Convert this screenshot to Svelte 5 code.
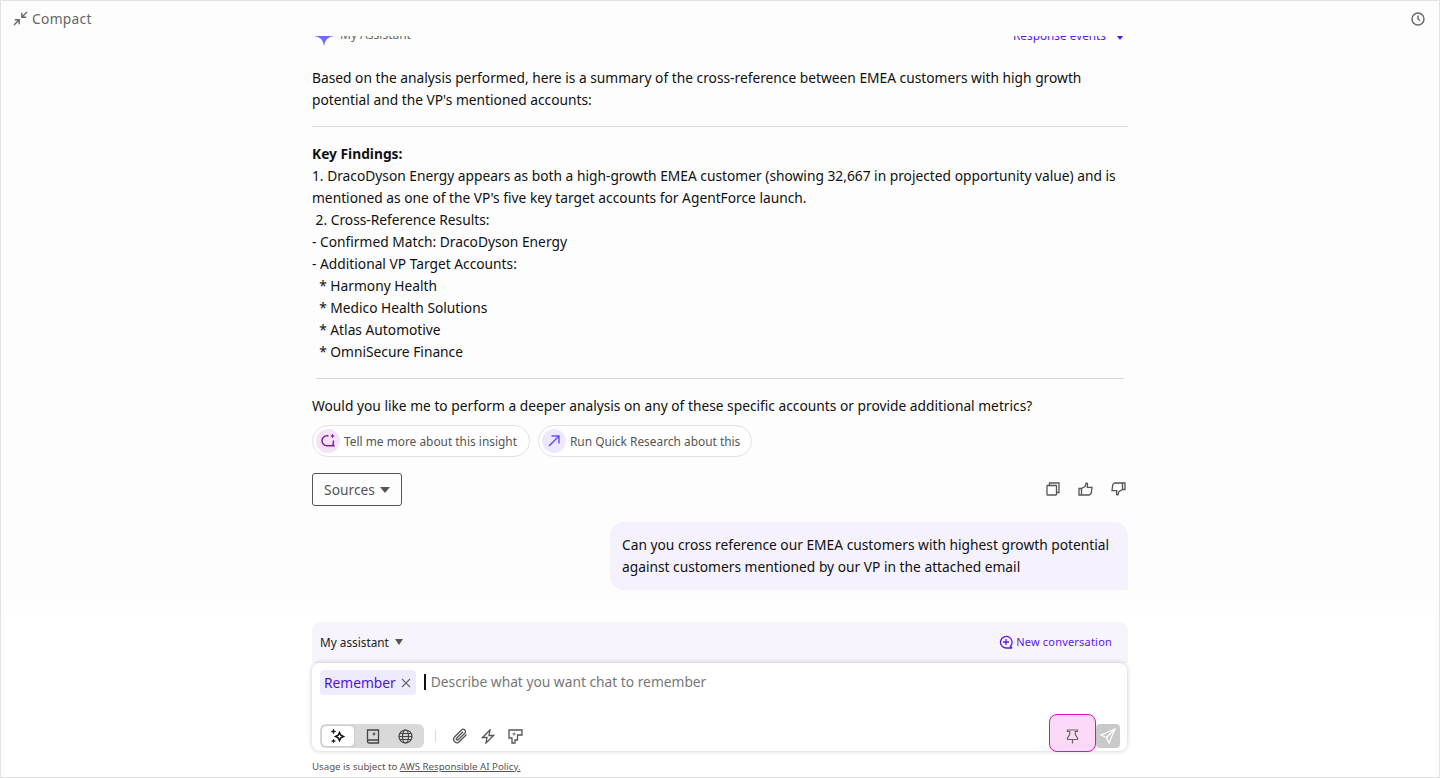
<script lang="ts">
  const findings = [
    "1. DracoDyson Energy appears as both a high-growth EMEA customer (showing 32,667 in projected opportunity value) and is mentioned as one of the VP's five key target accounts for AgentForce launch.",
    "\u00a02. Cross-Reference Results:",
    "- Confirmed Match: DracoDyson Energy",
    "- Additional VP Target Accounts:",
    "\u00a0\u00a0* Harmony Health",
    "\u00a0\u00a0* Medico Health Solutions",
    "\u00a0\u00a0* Atlas Automotive",
    "\u00a0\u00a0* OmniSecure Finance"
  ];
</script>

<div class="page">
  <header class="topbar">
    <button class="compact" type="button">
      <svg width="15" height="15" viewBox="0 0 15 15" fill="none" stroke="currentColor" stroke-width="1.4">
        <path d="M1 14 6 9M1.800 8.800h4.400v4.400M14 1 9 6M13.200 6.200H8.800V1.800" />
      </svg>
      Compact
    </button>
    <svg class="clock" width="14" height="14" viewBox="0 0 14 14" fill="none" stroke="currentColor" stroke-width="1.4">
      <circle cx="7" cy="7" r="6" />
      <path d="M7 3.500V7l2.200 1.500" />
    </svg>
  </header>

  <main class="scroller">
    <div class="thread">
      <div class="msg-head">
        <div class="who">
          <svg width="20" height="20" viewBox="0 0 20 20"><path d="M10 0Q11 9 20 10Q11 11 10 20Q9 11 0 10Q9 9 10 0Z" fill="#6b6cff" /></svg>
          <span>My Assistant</span>
        </div>
        <div class="events">Response events <span class="caret-sm"></span></div>
      </div>

      <p class="lead">Based on the analysis performed, here is a summary of the cross-reference between EMEA customers with high growth potential and the VP's mentioned accounts:</p>
      <hr class="rule" />
      <div class="findings">
        <strong>Key Findings:</strong>
        {#each findings as line}
          <div>{line}</div>
        {/each}
      </div>
      <hr class="rule short" />
      <p class="follow">Would you like me to perform a deeper analysis on any of these specific accounts or provide additional metrics?</p>

      <div class="chips">
        <button class="chip" type="button">
          <span class="chip-icon pink">
            <svg width="16" height="16" viewBox="0 0 16 16" fill="none" stroke="#8a1a9c" stroke-width="1.500">
              <path d="M8.500 2.800H7a5 5 0 0 0 0 10H13.800L13 11.200A5.500 5.500 0 0 0 13.300 7.500" />
              <path d="M12.500 0.500 13.200 2.300 15 3 13.200 3.700 12.500 5.500 11.800 3.700 10 3 11.800 2.300Z" fill="#8a1a9c" stroke="none" />
            </svg>
          </span>
          Tell me more about this insight
        </button>
        <button class="chip" type="button">
          <span class="chip-icon violet">
            <svg width="14" height="14" viewBox="0 0 14 14" fill="none" stroke="#6f4cff" stroke-width="1.500">
              <path d="M2 12 12 2M4.500 2H12v7.500" />
            </svg>
          </span>
          Run Quick Research about this
        </button>
      </div>

      <div class="actions">
        <button class="sources" type="button">Sources <span class="caret"></span></button>
        <div class="feedback">
          <svg width="14" height="14" viewBox="0 0 14 14" fill="none" stroke="currentColor" stroke-width="1.300">
            <rect x="1" y="3.500" width="9.500" height="9.500" rx="0.500" />
            <path d="M3.500 3.500V1H13V10.500H10.500" />
          </svg>
          <svg width="15" height="14" viewBox="0 0 15 14" fill="none" stroke="currentColor" stroke-width="1.300">
            <path d="M1 6.500h2.500V13H1zM3.500 6.500 7 4.500 8.200 1 9.500 1.500 9.300 5.300H14L13.200 11.500 11.300 13H3.500" />
          </svg>
          <svg width="15" height="14" viewBox="0 0 15 14" fill="none" stroke="currentColor" stroke-width="1.300">
            <path d="M14 7.500h-2.500V1H14zM11.500 7.500 8 9.500 6.800 13 5.500 12.500 5.700 8.700H1L1.800 2.500 3.700 1H11.500" />
          </svg>
        </div>
      </div>

      <div class="user-row">
        <div class="bubble">Can you cross reference our EMEA customers with highest growth potential against customers mentioned by our VP in the attached email</div>
      </div>
    </div>
    <div class="fade"></div>
  </main>

  <footer class="composer">
    <div class="composer-head">
      <div class="picker">My assistant <span class="caret-xs"></span></div>
      <div class="new-conv">
        <svg width="14" height="14" viewBox="0 0 14 14" fill="none" stroke="currentColor" stroke-width="1.300">
          <path d="M13 13 11.400 11.300A5.800 5.800 0 1 0 7 13H13M7 4v6M4 7h6" />
        </svg>
        New conversation
      </div>
    </div>
    <div class="box">
      <div class="input-row">
        <span class="tag">
          Remember
          <svg width="10" height="10" viewBox="0 0 10 10" fill="none" stroke="#666" stroke-width="1.100"><path d="M1 1l8 8M9 1 1 9" /></svg>
        </span>
        <span class="cursor"></span>
        <span class="placeholder">Describe what you want chat to remember</span>
      </div>
      <div class="tools">
        <div class="segment">
          <span class="seg active">
            <svg width="16" height="16" viewBox="0 0 16 16" fill="none" stroke="#111" stroke-width="1.500">
              <path d="M9.500 4.500 10.800 7.200 13.500 8.500 10.800 9.800 9.500 12.500 8.200 9.800 5.500 8.500 8.200 7.200Z" />
              <path d="M3.500 1 4.100 2.900 6 3.500 4.100 4.100 3.500 6 2.900 4.100 1 3.500 2.900 2.900ZM3.500 11 4 12.500 5.500 13 4 13.500 3.500 15 3 13.500 1.500 13 3 12.500Z" fill="#111" stroke-width="0.500" />
            </svg>
          </span>
          <span class="seg">
            <svg width="14" height="15" viewBox="0 0 14 15" fill="none" stroke="#444" stroke-width="1.300">
              <path d="M1.500 12.500V1H12.500V14H3A1.500 1.500 0 0 1 3 11H12.500" />
              <path d="M8 2.500 8.600 4.400 10.500 5 8.600 5.600 8 7.500 7.400 5.600 5.500 5 7.400 4.400Z" fill="#444" stroke="none" />
            </svg>
          </span>
          <span class="seg">
            <svg width="15" height="15" viewBox="0 0 15 15" fill="none" stroke="#444" stroke-width="1.200">
              <circle cx="7.500" cy="7.500" r="6.500" />
              <ellipse cx="7.500" cy="7.500" rx="3" ry="6.500" />
              <path d="M1 7.500h13M2 4.500h11M2 10.500h11" />
            </svg>
          </span>
        </div>
        <span class="sep"></span>
        <svg width="16" height="16" viewBox="0 0 16 16" fill="none" stroke="#555" stroke-width="1.300">
          <path d="M14.500 6.500 7.500 13.500a3.300 3.300 0 0 1-5-4.500L9.500 2a2.300 2.300 0 0 1 3.300 3.300L6.200 11.800a1.100 1.100 0 0 1-1.600-1.600L11 3.800" />
        </svg>
        <svg width="14" height="15" viewBox="0 0 14 15" fill="none" stroke="#555" stroke-width="1.300">
          <path d="M9 1 1.500 8.500H6L5 14 12.500 6.500H8Z" />
        </svg>
        <svg width="15" height="15" viewBox="0 0 15 15" fill="none" stroke="#555" stroke-width="1.300">
          <path d="M4 14V9H1V1H14V6H9.500V11H7V14Z" />
          <path d="M6 2.800 6.500 4.500 8.200 5 6.500 5.500 6 7.200 5.500 5.500 3.800 5 5.500 4.500Z" fill="#555" stroke="none" />
        </svg>
        <span class="grow"></span>
        <span class="pin">
          <svg width="13" height="15" viewBox="0 0 13 15" fill="none" stroke="#666" stroke-width="1.200">
            <path d="M1.500 1H11.500V2.500H9.300V5.500L11.500 9V10.500H1.500V9L3.700 5.500V2.500H1.500ZM6.500 10.500V14.500" />
          </svg>
        </span>
        <span class="send">
          <svg width="16" height="16" viewBox="0 0 16 16" fill="none" stroke="#fff" stroke-width="1.200">
            <path d="M15 1 1 7 6.500 9.500 9 15ZM15 1 6.500 9.500" />
          </svg>
        </span>
      </div>
    </div>
    <p class="legal">Usage is subject to <u>AWS Responsible AI Policy.</u></p>
  </footer>
</div>

<style>
  :global(body) {
    margin: 0;
    background: #fff;
  }

  .page {
    height: 778px;
    box-sizing: border-box;
    border: 1px solid #e2e2e2;
    display: flex;
    flex-direction: column;
    overflow: hidden;
    background: #fff;
    color: #111;
    font-family: "Noto Sans", sans-serif;
    font-size: 13.77px;
    line-height: 22px;
  }

  .topbar {
    flex: 0 0 35px;
    display: flex;
    align-items: center;
    justify-content: space-between;
    padding: 0 14px 0 12px;
    color: #666;
    background: #fdfdfd;
  }

  .compact {
    display: flex;
    align-items: center;
    gap: 4px;
    padding: 0;
    border: 0;
    background: none;
    color: #666;
    font: inherit;
    letter-spacing: 0.3px;
  }

  .scroller {
    flex: 1;
    min-height: 0;
    overflow: hidden;
    position: relative;
    background: #fdfdfd;
  }

  .thread {
    width: 816px;
    margin: 0 auto;
  }

  .msg-head {
    height: 30px;
    margin-top: -16px;
    display: flex;
    justify-content: space-between;
    align-items: center;
    font-size: 12px;
    color: #666;
  }

  .who {
    display: flex;
    align-items: center;
    gap: 6px;
    margin-left: 2px;
  }

  .who svg {
    margin-top: 2px;
  }

  .events {
    display: flex;
    align-items: center;
    gap: 11px;
    color: #5a17ee;
    font-size: 11.800px;
    padding-right: 5px;
  }

  .caret-sm {
    margin: 3px 0 -3px;
    border: 3px solid transparent;
    border-top: 4px solid #5a17ee;
    border-bottom: 0;
  }

  p {
    margin: 0;
  }

  .lead {
    margin-top: 17px;
  }

  .rule {
    margin: 15px 0 16px;
    border: 0;
    border-top: 1px solid #d8d8d8;
  }

  .rule.short {
    margin: 15px 4px 16px;
  }

  .findings strong {
    font-weight: 700;
    display: block;
  }

  .chips {
    display: flex;
    gap: 8px;
    margin-top: 8px;
  }

  .chip {
    height: 32px;
    box-sizing: border-box;
    display: flex;
    align-items: center;
    gap: 4px;
    padding: 0 11px 0 3px;
    border: 1px solid #e2e2e2;
    border-radius: 16px;
    background: #fff;
    color: #555;
    font: inherit;
    font-size: 11.900px;
  }

  .chip:first-child {
    padding-right: 12px;
  }

  .chip-icon {
    width: 24px;
    height: 24px;
    border-radius: 50%;
    display: grid;
    place-items: center;
  }

  .pink {
    background: #f3e3f5;
  }

  .violet {
    background: #ece8ff;
  }

  .actions {
    display: flex;
    justify-content: space-between;
    align-items: center;
    margin-top: 16px;
  }

  .sources {
    height: 33px;
    width: 90px;
    box-sizing: border-box;
    display: flex;
    align-items: center;
    justify-content: center;
    gap: 5px;
    border: 1px solid #555;
    border-radius: 3px;
    background: none;
    color: #555;
    font: inherit;
  }

  .caret {
    border: 5px solid transparent;
    border-top: 6px solid #555;
    border-bottom: 0;
  }

  .feedback {
    display: flex;
    gap: 18px;
    color: #555;
    padding-right: 2px;
    margin-top: -2px;
  }

  .user-row {
    display: flex;
    justify-content: flex-end;
    margin-top: 16px;
  }

  .bubble {
    width: 518px;
    box-sizing: border-box;
    padding: 12px;
    background: #f5f2fd;
    border-radius: 14px 14px 0 14px;
  }

  .fade {
    position: absolute;
    left: 0;
    right: 0;
    bottom: 0;
    height: 32px;
    background: linear-gradient(to bottom, rgba(255, 255, 255, 0), #fff);
  }

  .composer {
    flex: 0 0 155px;
    width: 816px;
    margin: 0 auto;
  }

  .composer-head {
    height: 41px;
    box-sizing: border-box;
    padding: 0 16px 2px 8px;
    display: flex;
    justify-content: space-between;
    align-items: center;
    background: #f7f4fe;
    border-radius: 8px 8px 0 0;
    font-size: 11.800px;
  }

  .picker {
    display: flex;
    align-items: center;
    gap: 6px;
    color: #222;
  }

  .caret-xs {
    border: 4.500px solid transparent;
    border-top: 6px solid #555;
    border-bottom: 0;
  }

  .new-conv {
    display: flex;
    align-items: center;
    gap: 3px;
    color: #5a17ee;
    font-size: 11px;
    letter-spacing: 0.2px;
  }

  .box {
    height: 88px;
    box-sizing: border-box;
    margin-right: 1px;
    background: #fff;
    border-radius: 8px;
    box-shadow: 0 0 5px rgba(0, 0, 0, 0.22);
    padding: 7px 7px 3px 8px;
    display: flex;
    flex-direction: column;
    justify-content: space-between;
  }

  .input-row {
    display: flex;
    align-items: center;
    height: 25px;
  }

  .tag {
    background: #eeeaff;
    color: #4d12e0;
    border-radius: 4px;
    padding: 0 5px 0 4px;
    height: 25px;
    display: flex;
    align-items: center;
    gap: 5px;
  }

  .cursor {
    width: 2px;
    height: 16px;
    background: #111;
    margin-left: 8px;
    margin-right: 5px;
    margin-bottom: 2px;
  }

  .placeholder {
    color: #777;
    padding-bottom: 2px;
  }

  .tools {
    display: flex;
    align-items: center;
    gap: 13px;
    height: 24px;
  }

  .segment {
    display: flex;
    background: #d9d9d9;
    border-radius: 6px;
    padding: 2px;
    height: 24px;
    box-sizing: border-box;
    align-items: center;
    margin-right: -2px;
  }

  .seg {
    width: 33px;
    height: 20px;
    display: grid;
    place-items: center;
  }

  .seg.active {
    width: 32px;
    margin-right: 2px;
    background: #fff;
    border-radius: 4px;
    box-shadow: 0 0 1px rgba(0, 0, 0, 0.4);
  }

  .sep {
    width: 1px;
    height: 12px;
    background: #ddd;
    margin-right: 3px;
  }

  .grow {
    flex: 1;
  }

  .pin {
    width: 47px;
    height: 38px;
    margin: -10px -13px -4px 0;
    box-sizing: border-box;
    border: 1px solid #e010b0;
    border-radius: 8px;
    background: #fcd9f6;
    display: grid;
    place-items: center;
    padding-top: 6px;
  }

  .send {
    width: 24px;
    height: 24px;
    background: #c9c9c9;
    border-radius: 4px;
    display: grid;
    place-items: center;
  }

  .legal {
    margin-top: 6px;
    font-size: 9.700px;
    line-height: 20px;
    color: #555;
  }
</style>
